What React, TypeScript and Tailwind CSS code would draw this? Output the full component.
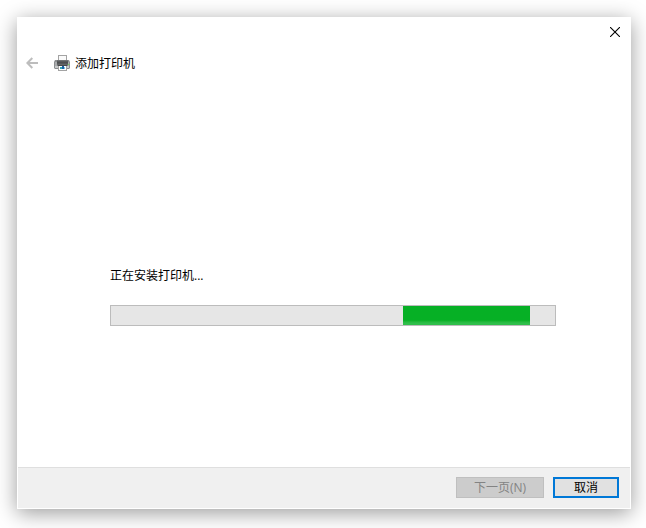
import type { ReactNode } from 'react';

interface IFooterButtonProps {
  children: ReactNode;
  className: string;
  disabled?: boolean;
}

interface IMarqueeProgressProps {
  labelId: string;
  offset: number;
  size: number;
}

const BackIcon = () => (
  <svg width="12" height="12" viewBox="0 0 12 12" fill="none" stroke="#bdbdbd" strokeWidth="2" aria-hidden="true">
    <path d="M12 6H1.5M6.3 1L1.3 6l5 5" />
  </svg>
);

const CloseIcon = () => (
  <svg width="10" height="10" viewBox="0 0 10 10" fill="none" stroke="#000" strokeWidth="1.1" aria-hidden="true">
    <path d="M0 0l10 10M10 0L0 10" />
  </svg>
);

const PrinterIcon = () => (
  <svg width="16" height="16" viewBox="0 0 16 16" aria-hidden="true">
    <defs>
      <linearGradient id="printer-body" x1="0" y1="0" x2="0" y2="1">
        <stop offset="0" stopColor="#7c7e80" />
        <stop offset="0.35" stopColor="#4a4c4e" />
        <stop offset="0.7" stopColor="#5c5e60" />
        <stop offset="1" stopColor="#8e9092" />
      </linearGradient>
    </defs>
    <path d="M4 0h9v6H4z" fill="#a3a3a3" />
    <path d="M5 1h7v5H5z" fill="#fafafa" />
    <path d="M1 5h2v1h11V5h1l1 2v6l-1 1H1l-1-1V7z" fill="#8b8d8f" />
    <path d="M3 5h11v6H3z" fill="url(#printer-body)" />
    <path d="M1 7h2v4H1zM14 7h1v4h-1z" fill="#a9abad" />
    <path d="M1 11h14v2H1z" fill="#c8cacb" />
    <path d="M14 9h1v1h-1z" fill="#6fe04c" />
    <path d="M4 11h9v5H4z" fill="#a3a3a3" />
    <path d="M5 11h7v4H5z" fill="#fff" />
    <path d="M4 10h9v1H4z" fill="#47494b" />
    <path d="M6 12h2v2H6z" fill="#35a9b5" />
    <path d="M8 11h2v3H8z" fill="#1b5fa6" />
    <path d="M10 12h1v2h-1z" fill="#7cc6e8" />
  </svg>
);

const FooterButton = ({ children, className, disabled }: IFooterButtonProps) => (
  <button type="button" disabled={disabled} className={`flex h-[21px] items-center justify-center ${className}`}>
    {children}
  </button>
);

const MarqueeProgress = ({ labelId, offset, size }: IMarqueeProgressProps) => (
  <div
    role="progressbar"
    aria-labelledby={labelId}
    className="h-[21px] overflow-hidden border border-[#bcbcbc] bg-[#e6e6e6]"
  >
    <div
      className="h-full bg-linear-to-b from-[#06b025] from-75% to-[#2fbf4a] to-90%"
      style={{ marginLeft: `${offset}%`, width: `${size}%` }}
    />
  </div>
);

export default function App() {
  return (
    <div className="flex min-h-screen bg-white pt-[17px] pr-[15px] pb-[19px] pl-[17px] font-['Open_Sans','Noto_Sans_CJK_SC',sans-serif] text-xs text-black">
      <main className="flex flex-1 flex-col border border-white bg-white shadow-[0_4px_20px_rgba(0,0,0,0.4)]">
        <header>
          <div className="flex justify-end">
            <button type="button" aria-label="关闭" className="p-[10px] pt-[9px]">
              <CloseIcon />
            </button>
          </div>
          <div className="flex items-center gap-4 px-2 pt-[7px]">
            <button type="button" aria-label="返回" disabled>
              <BackIcon />
            </button>
            <div className="flex items-center gap-[5px]">
              <PrinterIcon />
              <h1 className="pt-0.5">添加打印机</h1>
            </div>
          </div>
        </header>

        <section className="flex flex-1 flex-col justify-center gap-[21px] pt-[54px] pr-[74px] pl-[92px]">
          <p id="install-status">正在安装打印机...</p>
          <MarqueeProgress labelId="install-status" offset={65.8} size={28.6} />
        </section>

        <footer className="flex justify-end gap-[9px] border-t border-[#dfdfdf] bg-[#f0f0f0] pt-[9px] pr-[11px] pb-[10px]">
          <FooterButton disabled className="w-[88px] border border-[#bfbfbf] bg-[#cccccc] text-[#838383]">
            下一页(N)
          </FooterButton>
          <FooterButton className="w-[66px] border-2 border-[#0078d7] bg-[#e1e1e1]">取消</FooterButton>
        </footer>
      </main>
    </div>
  );
}
